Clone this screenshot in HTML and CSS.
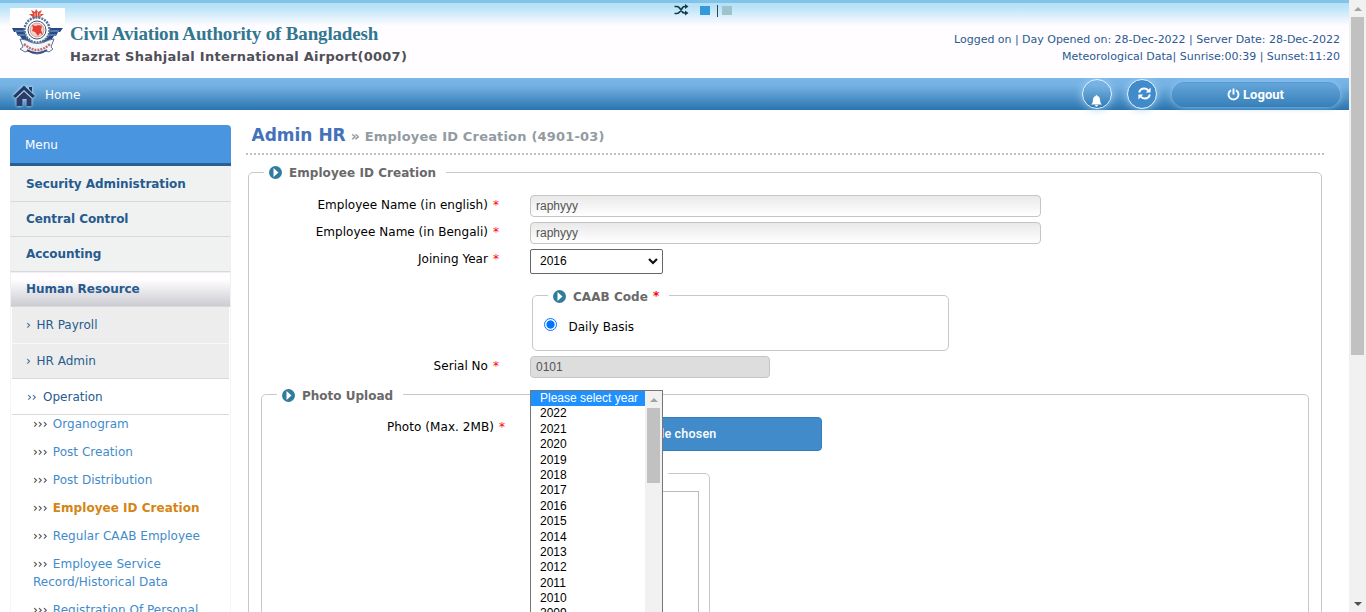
FILE: index.html
```
<!DOCTYPE html>
<html lang="en">
<head>
<meta charset="utf-8">
<title>Employee ID Creation</title>
<link rel="stylesheet" href="styles.css">
</head>
<body>
<svg class="defs" width="0" height="0">
  <symbol id="arrow" viewBox="0 0 13 13"><circle cx="6.5" cy="6.5" r="6.5" fill="#317c9e"/><path d="M4.5 2v9L9.5 6.5z" fill="#fff"/></symbol>
</svg>
<div class="app">
<div class="page">
  <header class="header">
    <svg class="logo" viewBox="0 0 55 48">
      <rect width="55" height="48" fill="#fff"/>
      <path d="M24 10L19 6l4 0-2-4 4 2 1-3 2 3 4-2-2 4h4l-5 4z" fill="#df4537"/><path d="M25 5v4M27.500 4v6M30 5v4" stroke="#fff" stroke-width=".6"/>
      <path d="M2 20h15l1 3h18l1-3h16l-3 4h-2l-2 4h-2l-2 3-6 3H18l-6-3-2-3H8l-2-4H4z" fill="#244b88"/>
      <path d="M5 23h13M8 27h11M36 23h13M35 27h11" stroke="#c5d5e8" stroke-width=".7"/>
      <circle cx="27" cy="22" r="12.500" fill="#fff" stroke="#547194" stroke-width="2.500" stroke-dasharray="2 1"/>
      <circle cx="27" cy="22" r="9" fill="#fff" stroke="#32527f"/>
      <circle cx="27" cy="22" r="7" fill="#f0d5d2" stroke="#cf7770" stroke-width=".7"/>
      <path d="M22 17l4 1 2-1 4 1-1 4 2 5-3-2-2 3-3-4-3-1 1-3z" fill="#e53e31"/>
      <path d="M10 31l6 1q11 7 23 0l5-1-3 8 2 2-4 3-3-1q-9 6-18 0l-3 1-5-3 3-2z" fill="#f4f6fa" stroke="#5d7596"/>
      <path d="M14 36q13 12 26 0" fill="none" stroke="#bd6d74" stroke-width="2.500" stroke-dasharray="2 1"/>
      <path d="M17 42q10 6 20 0" fill="none" stroke="#324c82" stroke-width="1.500"/>
    </svg>
    <div class="org">
      <div class="org-name">Civil Aviation Authority of Bangladesh</div>
      <div class="org-unit">Hazrat Shahjalal International Airport(0007)</div>
    </div>
    <div class="themes">
      <svg class="shuffle" viewBox="0 0 14 12"><path d="M0 2.500h2.500q1.500 0 3 2l2 3q1 1.500 2.500 1.500h1M0 9.500h2.500q1.500 0 3-2l2-3q1-2 2.500-2h1" fill="none" stroke="#153c46" stroke-width="1.700"/><path d="M10.500 0L14 2.500 10.500 5zM10.500 6.500L14 9l-3.500 2.500z" fill="#153c46"/></svg>
      <i class="swatch blue"></i><i class="bar"></i><i class="swatch gray"></i>
    </div>
    <div class="status">
      <div class="st1">Logged on | Day Opened on: 28-Dec-2022 | Server Date: 28-Dec-2022</div>
      <div class="st2">Meteorological Data| Sunrise:00:39 | Sunset:11:20</div>
    </div>
  </header>
  <nav class="nav">
    <svg class="house" viewBox="0 0 24 23"><path d="M12 1.500L23 12l-2.500 2L12 6l-8.500 8L1 12z" fill="#203c66"/><path d="M17 3h3v5l-3-3z" fill="#203c66"/><path d="M4.500 14.500L12 7.500l7.500 7V22h-5v-7h-4v7h-6z" fill="#2b3c68"/></svg>
    <span class="home">Home</span>
    <span class="round bell"><svg width="11" height="12" viewBox="0 0 11 12"><path d="M5.500 0q.8 0 .8 1 2.700.6 2.700 4 0 3 2 4.500H0Q2 8 2 5q0-3.400 2.700-4 0-1 .8-1zM4 10h3q-.3 1.700-1.500 1.700T4 10z" fill="#fff"/></svg></span>
    <span class="round sync"><svg width="13" height="13" viewBox="0 0 13 13"><path d="M1.200 5.500Q2 1.500 6.300 1.500q2.500 0 4 2M11.800 7.500q-.8 4-5.100 4-2.500 0-4-2" fill="none" stroke="#fff" stroke-width="2"/><path d="M12.600.5v5H7.800zM.4 12.500v-5h4.800z" fill="#fff"/></svg></span>
    <span class="logout"><svg width="13" height="13" viewBox="0 0 13 13"><path d="M4 2.200a5 5 0 1 0 5 0M6.500 0.500v6" fill="none" stroke="#fff" stroke-width="1.900"/></svg><b>Logout</b></span>
  </nav>
  <div class="body">
    <aside class="side">
      <div class="menu">Menu</div>
      <div class="top first"><span>Security Administration</span></div>
      <div class="top"><span>Central Control</span></div>
      <div class="top"><span>Accounting</span></div>
      <div class="top active"><span>Human Resource</span></div>
      <div class="subs">
        <div class="sub"><i>›</i><span>HR Payroll</span></div>
        <div class="sub"><i>›</i><span>HR Admin</span></div>
        <div class="sub open"><i>››</i><span>Operation</span></div>
        <div class="leaf"><i>›››</i> <span>Organogram</span></div>
        <div class="leaf"><i>›››</i> <span>Post Creation</span></div>
        <div class="leaf"><i>›››</i> <span>Post Distribution</span></div>
        <div class="leaf current"><i>›››</i> <span>Employee ID Creation</span></div>
        <div class="leaf"><i>›››</i> <span>Regular CAAB Employee</span></div>
        <div class="leaf"><i>›››</i> <span>Employee Service<br>Record/Historical Data</span></div>
        <div class="leaf"><i>›››</i> <span>Registration Of Personal</span></div>
      </div>
    </aside>
    <main class="main">
      <h1><span class="mod">Admin HR</span><span class="raquo">»</span><span class="crumb">Employee ID Creation (4901-03)</span></h1>
      <fieldset class="outer">
        <legend><svg><use href="#arrow"/></svg><span>Employee ID Creation</span></legend>
        <div class="row"><label><span>Employee Name (in english)</span><em>*</em></label><div class="input">raphyyy</div></div>
        <div class="row"><label><span>Employee Name (in Bengali)</span><em>*</em></label><div class="input">raphyyy</div></div>
        <div class="row year"><label><span>Joining Year</span><em>*</em></label>
          <div class="select"><span>2016</span><svg width="10" height="7" viewBox="0 0 10 7"><path d="M1 1l4 4 4-4" fill="none" stroke="#111" stroke-width="2.200"/></svg></div></div>
        <fieldset class="code">
          <legend><svg><use href="#arrow"/></svg><span>CAAB Code</span><em>*</em></legend>
          <div class="option"><i class="radio"></i><span>Daily Basis</span></div>
        </fieldset>
        <div class="row serial"><label><span>Serial No</span><em>*</em></label><div class="input off">0101</div></div>
        <fieldset class="photo">
          <legend><svg><use href="#arrow"/></svg><span>Photo Upload</span></legend>
          <div class="row"><label><span>Photo (Max. 2MB)</span><em>*</em></label><div class="file">le chosen</div></div>
          <fieldset class="preview"><legend></legend><div class="frame"></div></fieldset>
        </fieldset>
      </fieldset>
    </main>
  </div>
</div>
<div class="scroll"><i class="up"></i><i class="thumb"></i><i class="down"></i></div>
<div class="dropdown">
  <div class="years">
    <div class="sel">Please select year</div>
    <div>2022</div><div>2021</div><div>2020</div><div>2019</div><div>2018</div><div>2017</div><div>2016</div><div>2015</div><div>2014</div><div>2013</div><div>2012</div><div>2011</div><div>2010</div><div>2009</div>
  </div>
  <div class="ddscroll"><i class="up"></i><i class="ddthumb"></i></div>
</div>
</div>
</body>
</html>
```
FILE: styles.css
```
* { box-sizing: border-box; }
html, body { margin: 0; height: 612px; overflow: hidden; }
body { font: 12px/18px "DejaVu Sans", Verdana, sans-serif; color: #000; background: #fff; }
i, em { font-style: normal; }
span, b { white-space: nowrap; }
.defs { position: absolute; }
.app { display: flex; height: 612px; position: relative; overflow: hidden; }
.page { width: 1349px; height: 612px; overflow: hidden; }

.header { height: 78px; border-top: 3px solid #82c3e9; display: flex; position: relative; background: linear-gradient(#b5e0f7 0, #b9e3f8 4px, #fffdff 23px); }
.logo { width: 55px; height: 48px; margin: 5px 0 0 10px; }
.org { margin: 20px 0 0 5px; flex: 1; }
.org-name { font: bold 19px/22px "Liberation Serif", serif; letter-spacing: -0.16px; color: #317790; }
.org-unit { font-weight: bold; font-size: 13px; line-height: 24px; color: #505058; letter-spacing: 0.270px; }
.themes { position: absolute; left: 674px; top: 0; display: flex; align-items: center; height: 14px; }
.shuffle { width: 15px; height: 12px; margin-right: 11px; }
.swatch { width: 10px; height: 9px; background: #3498db; }
.gray { background: #9dc4cc; }
.bar { width: 1px; height: 12px; background: #345; margin: 1px 4px 0 7px; }
.status { margin: 28px 9px 0 0; text-align: right; font-size: 11px; line-height: 17px; color: #2b5a91; }
.st1 { letter-spacing: -0.02px; }

.nav { height: 32px; display: flex; align-items: center; background: linear-gradient(#7ab6e7 0, #74b1e2 8px, #2a74ae 100%); color: #fff; }
.house { width: 24px; height: 23px; margin: 2px 9px 0 12px; filter: drop-shadow(0 0 1.500px #e4f4ff); }
.home { flex: 1; padding-top: 1px; }
.round { width: 30px; height: 30px; border: 1px solid #e8f2fa; border-radius: 50%; display: flex; justify-content: center; align-items: center; box-shadow: 0 0 8px #9fcdf3; }
.bell { margin-right: 15px; padding: 13px 1px 0 0; }
.sync { background: #428bca; margin-right: 15px; padding-left: 5px; padding-bottom: 1px; }
.logout { width: 168px; height: 25px; border-radius: 13px; border-top: 1px solid #539bd5; display: flex; align-items: center; justify-content: center; gap: 3px; margin: 1px 9px 0 0; padding: 0 1px 1px 0; font: 13px/18px Roboto, sans-serif; background: linear-gradient(#65a6da, #367fb9); box-shadow: 0 0 7px #92c7f0; }

.body { display: flex; height: 502px; }
.side { width: 221px; margin: 15px 0 0 10px; }
.menu { height: 41px; background: #4a95e0; border-bottom: 3px solid #286090; border-radius: 4px 4px 0 0; color: #fff; padding: 11px 15px; }
.top { height: 35px; background: #f0f2f1; border: 1px solid #f0f0f0; border-bottom-color: #d9d9d9; padding: 7px 15px; font-weight: bold; letter-spacing: -0.05px; color: #265b8f; }
.top.first { height: 36px; padding-top: 8px; }
.top.active { background: linear-gradient(#fffdff 20%, #cbccd2); }
.subs { border: solid #f5f5f5; border-width: 0 1px; height: 320px; }
.sub { height: 36px; margin: 0 1px; background: #ededed; border-bottom: 1px solid #f9f9f9; padding: 9px 14px; color: #265b8f; display: flex; }
.sub i { width: 10.500px; }
.sub:nth-child(1) { height: 37px; }
.sub:nth-child(2) { border-bottom-color: #d9d9d9; height: 35px; padding-top: 8px; }
.sub.open { background: #fff; border-color: #d9d9d9; padding-left: 15px; }
.sub.open i { width: 16px; }
.leaf { margin: 0 0 10px 22px; color: #428bca; letter-spacing: 0.030px; }
.leaf i { display: inline-block; width: 16px; color: #333; }
.current span { font-weight: bold; color: #d58512; }

.main { width: 1078px; margin-left: 15px; }
h1 { margin: 15px 0 0; height: 30px; border-bottom: 2px dotted #c0c0c0; display: flex; align-items: center; padding: 0 0 9px 5.500px; font-size: 17px; color: #4472ba; }
.raquo { font-size: 14px; color: #929ba2; margin: 2px 5px 0; }
.crumb { font-size: 13px; letter-spacing: 0.180px; color: #929ba2; margin-top: 4px; }
fieldset { border: 1px solid #c8c8c8; border-radius: 5px; margin: 0; padding: 0; min-width: 0; }
legend { display: flex; height: 20px; align-items: center; padding: 0 10px 0 5px; margin-left: 15px; font-weight: bold; letter-spacing: 0.050px; color: #696969; }
legend svg { width: 13px; height: 13px; margin-right: 7px; }
legend span { margin-top: 1px; }
legend em { margin-left: 5px; }
.photo > legend { letter-spacing: 0; }
em { color: #f00; }
.outer { width: 1074px; height: 500px; margin: 7px 0 0 2px; }
.row { display: flex; height: 27px; }
.outer > .row:first-of-type { margin-top: 13px; }
label { width: 250px; margin-right: 31px; padding-top: 1px; display: flex; justify-content: flex-end; letter-spacing: 0.030px; }
label em { margin-left: 5px; }
.input { width: 511px; height: 22px; border: 1px solid #c5c5c5; border-radius: 4px; background: linear-gradient(#e9e9e9, #fff); padding: 1px 5px; font: 12px/18px "Liberation Sans", sans-serif; color: #555; }
.input.off { width: 240px; background: #ddd; }
.select { width: 133px; height: 25px; border: 1px solid #666; border-radius: 2px; display: flex; justify-content: space-between; align-items: center; padding: 0 4px 1px 9px; font: 12px/18px "Liberation Sans", sans-serif; }
.year { height: 36px; }
.code { width: 417px; height: 66px; margin-left: 283px; }
.code > legend, .photo > legend { padding-top: 2px; }
.option { display: flex; align-items: center; padding: 13px 0 0 11px; }
.radio { width: 13px; height: 13px; border: 1px solid #0075ff; border-radius: 50%; background: radial-gradient(#0075ff 3.700px, #fff 4.500px); margin: -5px 11.500px 0 0; }
.serial { margin-top: 5px; height: 28px; }
.photo { width: 1048px; height: 300px; margin-left: 12px; }
.photo > .row { margin-top: 13px; height: 46px; }
.photo label { width: 243px; margin-right: 25px; letter-spacing: 0.060px; }
.file { width: 292px; height: 34px; border: 1px solid #357ebd; border-radius: 4px; background: #428bca; color: #fff; font: 500 12.500px/32px Roboto, "Liberation Sans", sans-serif; letter-spacing: 0.200px; padding-left: 130px; }
.preview { width: 170px; height: 200px; margin: 0 0 0 278px; }
.preview legend { width: 109px; margin-left: 18px; }
.frame { width: 140px; height: 160px; margin: 8px 0 0 18px; border: 1px solid #bbb; }

.scroll { width: 17px; height: 612px; background: #f1f1f1; display: flex; flex-direction: column; align-items: center; }
.up, .down { width: 0; height: 0; border: 4px solid transparent; border-top: 0; border-bottom-color: #a3a3a3; margin: 7px 0 6px; }
.thumb { width: 13px; height: 338px; background: #c1c1c1; }
.down { margin: auto 0 6px; border: 4px solid transparent; border-bottom: 0; border-top-color: #505050; }
.dropdown { position: absolute; left: 530px; top: 390px; width: 133px; height: 240px; border: 1px solid #767676; background: #fff; display: flex; font: 12px/15.400px "Liberation Sans", sans-serif; }
.years { flex: 1; }
.years div { padding-left: 9px; height: 15.400px; white-space: nowrap; }
.years .sel { background: #1e90ff; color: #fff; }
.ddscroll { width: 17px; background: #f1f1f1; display: flex; flex-direction: column; align-items: center; }
.ddthumb { width: 13px; height: 75px; background: #c1c1c1; }
```
